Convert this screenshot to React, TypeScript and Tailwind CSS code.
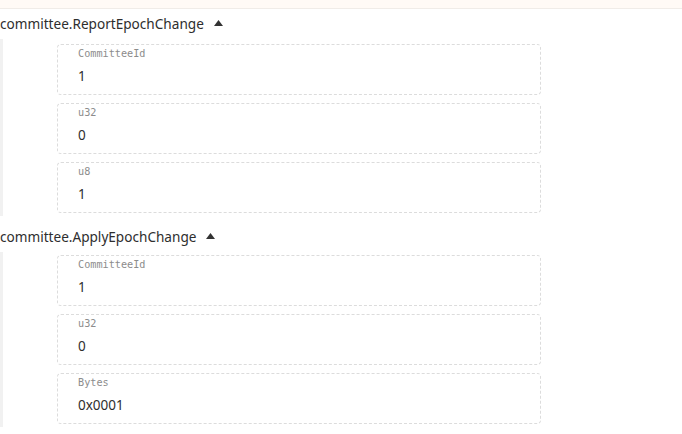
type Field = {
  type: string;
  value: string;
};

type EventItem = {
  name: string;
  fields: Field[];
};

const events: EventItem[] = [
  {
    name: "committee.ReportEpochChange",
    fields: [
      { type: "CommitteeId", value: "1" },
      { type: "u32", value: "0" },
      { type: "u8", value: "1" },
    ],
  },
  {
    name: "committee.ApplyEpochChange",
    fields: [
      { type: "CommitteeId", value: "1" },
      { type: "u32", value: "0" },
      { type: "Bytes", value: "0x0001" },
    ],
  },
];

function ParamBox({ type, value }: Field) {
  return (
    <div className="h-[51px] w-[484px] rounded border border-dashed border-[#dcdcdc] pl-[20px] pt-[2px]">
      <div className="font-['DejaVu_Sans_Mono',monospace] text-[10.2px] leading-[14px] text-[#8c8c8c]">
        {type}
      </div>
      <div className="mt-[6px] font-['Noto_Sans',sans-serif] text-[13.5px] leading-[19px] text-[#2e2e2e]">
        {value}
      </div>
    </div>
  );
}

function EventSection({ name, fields, first }: EventItem & { first: boolean }) {
  return (
    <div>
      <div className="flex h-[30px] items-center gap-[10px] font-['Noto_Sans',sans-serif] text-[13.6px] text-[#2e2e2e]">
        <span>{name}</span>
        <svg width="9" height="6" viewBox="0 0 9 6" className="mb-[2px]">
          <polygon points="4.5,0 9,6 0,6" fill="#333" />
        </svg>
      </div>
      <div
        className={`flex flex-col gap-[8px] border-l-[3px] border-[#f1f1f1] pb-[3px] pl-[54px] ${
          first ? "pt-[5px]" : "pt-[3px]"
        }`}
      >
        {fields.map((f, i) => (
          <ParamBox key={i} {...f} />
        ))}
      </div>
    </div>
  );
}

export default function App() {
  return (
    <div className="h-[434px] w-[682px] overflow-hidden bg-white">
      <div className="h-[9px] border-b border-[#f0ece8] bg-[#fffaf6]" />
      <div className="flex flex-col gap-[6px]">
        {events.map((e, i) => (
          <EventSection key={e.name} {...e} first={i === 0} />
        ))}
      </div>
    </div>
  );
}
